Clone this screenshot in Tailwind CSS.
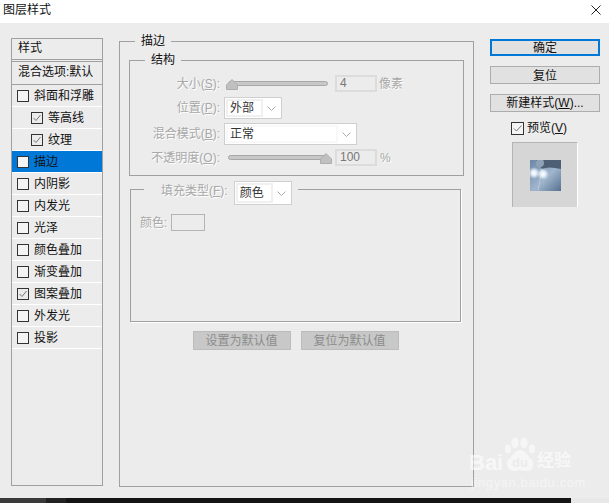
<!DOCTYPE html>
<html lang="zh">
<head>
<meta charset="utf-8">
<title>图层样式</title>
<script src="https://cdn.jsdelivr.net/npm/@tailwindcss/browser@4"></script>
</head>
<body class="m-0 overflow-hidden">
<div class="relative w-[609px] h-[503px] flex flex-col overflow-hidden bg-[#ececec] text-[12px] leading-[16px] text-[#111] font-['Liberation_Sans','Noto_Sans_CJK_SC',sans-serif]">
  <!-- title bar -->
  <div class="h-[23px] shrink-0 bg-white flex items-center justify-between pl-[3px] pr-[8px]">
    <span class="text-[#111] -mt-[4px]">图层样式</span>
    <svg class="w-[10px] h-[10px] -mt-[3px]" viewBox="0 0 10 10"><path d="M0.5 0.5L9.5 9.5M9.5 0.5L0.5 9.5" stroke="#222" stroke-width="1" fill="none"/></svg>
  </div>

  <div class="flex-1 flex items-start min-h-0">
    <!-- left list -->
    <div class="ml-[11px] mt-[15px] w-[92px] h-[448px] shrink-0 border border-[#a0a0a0] flex flex-col">
      <div class="h-[21px] shrink-0 pl-[6px] pb-[3px] flex items-center border-b border-[#a0a0a0]">样式</div>
      <div class="h-[24px] shrink-0 mt-[1px] border-t border-b border-[#a0a0a0] pl-[6px] pb-[3px] flex items-center whitespace-nowrap">混合选项:默认</div>
      <div class="flex flex-col">
        <div class="h-[22px] flex items-center border-b border-white pl-[5px] gap-[5px]"><span class="w-[12px] h-[12px] border border-[#333] bg-[#f4f4f4] shrink-0"></span>斜面和浮雕</div>
        <div class="h-[22px] flex items-center border-b border-white pl-[19px] gap-[5px]"><svg class="w-[12px] h-[12px] shrink-0" viewBox="0 0 12 12"><rect x=".5" y=".5" width="11" height="11" fill="#ececec" stroke="#333"/><path d="M2.5 6l2.5 2.5L9.5 3" stroke="#777" fill="none"/></svg>等高线</div>
        <div class="h-[22px] flex items-center border-b border-white pl-[19px] gap-[5px]"><svg class="w-[12px] h-[12px] shrink-0" viewBox="0 0 12 12"><rect x=".5" y=".5" width="11" height="11" fill="#ececec" stroke="#333"/><path d="M2.5 6l2.5 2.5L9.5 3" stroke="#777" fill="none"/></svg>纹理</div>
        <div class="h-[22px] flex items-center border-b border-white pl-[5px] gap-[5px] bg-[#0078d7]"><span class="w-[12px] h-[12px] border border-[#333] bg-[#f4f4f4] shrink-0"></span>描边</div>
        <div class="h-[22px] flex items-center border-b border-white pl-[5px] gap-[5px]"><span class="w-[12px] h-[12px] border border-[#333] bg-[#f4f4f4] shrink-0"></span>内阴影</div>
        <div class="h-[22px] flex items-center border-b border-white pl-[5px] gap-[5px]"><span class="w-[12px] h-[12px] border border-[#333] bg-[#f4f4f4] shrink-0"></span>内发光</div>
        <div class="h-[22px] flex items-center border-b border-white pl-[5px] gap-[5px]"><span class="w-[12px] h-[12px] border border-[#333] bg-[#f4f4f4] shrink-0"></span>光泽</div>
        <div class="h-[22px] flex items-center border-b border-white pl-[5px] gap-[5px]"><span class="w-[12px] h-[12px] border border-[#333] bg-[#f4f4f4] shrink-0"></span>颜色叠加</div>
        <div class="h-[22px] flex items-center border-b border-white pl-[5px] gap-[5px]"><span class="w-[12px] h-[12px] border border-[#333] bg-[#f4f4f4] shrink-0"></span>渐变叠加</div>
        <div class="h-[22px] flex items-center border-b border-white pl-[5px] gap-[5px]"><svg class="w-[12px] h-[12px] shrink-0" viewBox="0 0 12 12"><rect x=".5" y=".5" width="11" height="11" fill="#ececec" stroke="#333"/><path d="M2.5 6l2.5 2.5L9.5 3" stroke="#777" fill="none"/></svg>图案叠加</div>
        <div class="h-[22px] flex items-center border-b border-white pl-[5px] gap-[5px]"><span class="w-[12px] h-[12px] border border-[#333] bg-[#f4f4f4] shrink-0"></span>外发光</div>
        <div class="h-[22px] flex items-center border-b border-white pl-[5px] gap-[5px]"><span class="w-[12px] h-[12px] border border-[#333] bg-[#f4f4f4] shrink-0"></span>投影</div>
      </div>
    </div>

    <!-- middle -->
    <fieldset class="ml-[16px] mt-[9px] w-[355px] h-[455px] shrink-0 border border-[#a0a0a0] pl-[9px] pr-[9px] min-w-0">
      <legend class="ml-[6px] px-[6px] h-[18px] leading-[18px] text-[#111]">描边</legend>

      <fieldset class="mt-[2px] w-[335px] h-[124px] border border-[#a0a0a0] min-w-0">
        <legend class="ml-[15px] px-[6px] h-[16px] leading-[16px] text-[#111]">结构</legend>
        <div class="flex flex-col pt-[7px] text-[#a8a8a8] [text-shadow:1px_1px_0_#fff]">
          <div class="h-[17px] flex items-center">
            <span class="w-[90px] text-right shrink-0">大小(<u>S</u>):</span>
            <div class="relative ml-[8px] w-[100px] h-[5px] rounded-full bg-[#c8c8c8] border border-[#a8a8a8]">
              <svg class="absolute left-[-3px] top-[-3px] w-[12px] h-[11px]" viewBox="0 0 12 11"><path d="M6 0.5L11.5 6V10.5H0.5V6Z" fill="#c0c0c0" stroke="#adadad"/></svg>
            </div>
            <span class="ml-[7px] w-[42px] h-[17px] shrink-0 border-2 border-[#dcdcdc] bg-[#ececec] pl-[3px] leading-[13px] text-[#777] [text-shadow:none]">4</span>
            <span class="ml-[2px]">像素</span>
          </div>
          <div class="h-[22px] mt-[5px] flex items-center">
            <span class="w-[90px] text-right shrink-0">位置(<u>P</u>):</span>
            <div class="ml-[4px] w-[58px] h-[22px] shrink-0 border border-[#cfcfcf] bg-white p-[1px] flex [text-shadow:none]">
              <span class="w-[37px] border-2 border-[#f0f0f0] pl-[2px] leading-[15px] text-[#333]">外部</span>
              <span class="flex-1 flex items-center justify-center"><svg class="w-[9px] h-[5px]" viewBox="0 0 9 5"><path d="M.5 .5L4.5 4.5L8.5 .5" stroke="#aaa" fill="none"/></svg></span>
            </div>
          </div>
          <div class="h-[22px] mt-[4px] flex items-center">
            <span class="w-[90px] text-right shrink-0 whitespace-nowrap">混合模式(<u>B</u>):</span>
            <div class="ml-[4px] w-[133px] h-[22px] shrink-0 border border-[#cfcfcf] bg-white p-[1px] flex [text-shadow:none]">
              <span class="w-[112px] border-2 border-[#f8f8f8] pl-[2px] leading-[15px] text-[#333]">正常</span>
              <span class="flex-1 flex items-center justify-center"><svg class="w-[9px] h-[5px]" viewBox="0 0 9 5"><path d="M.5 .5L4.5 4.5L8.5 .5" stroke="#aaa" fill="none"/></svg></span>
            </div>
          </div>
          <div class="h-[17px] mt-[4px] flex items-center">
            <span class="w-[90px] text-right shrink-0 whitespace-nowrap">不透明度(<u>O</u>):</span>
            <div class="relative ml-[8px] w-[100px] h-[5px] rounded-full bg-[#c8c8c8] border border-[#a8a8a8]">
              <svg class="absolute right-[-5px] top-[-3px] w-[12px] h-[11px]" viewBox="0 0 12 11"><path d="M6 0.5L11.5 6V10.5H0.5V6Z" fill="#c0c0c0" stroke="#adadad"/></svg>
            </div>
            <span class="ml-[7px] w-[42px] h-[17px] shrink-0 border-2 border-[#dcdcdc] bg-[#ececec] pl-[3px] leading-[13px] text-[#777] [text-shadow:none]">100</span>
            <span class="ml-[3px]">%</span>
          </div>
        </div>
      </fieldset>

      <fieldset class="mt-[5px] ml-[1px] w-[331px] h-[141px] border border-[#a0a0a0] min-w-0 [box-shadow:1px_1px_0_#fff]">
        <legend class="ml-[13px] pl-[17px] pr-[6px] h-[16px] flex items-start">
          <span class="mt-[2px] mr-[6px] whitespace-nowrap text-[#a8a8a8] [text-shadow:1px_1px_0_#fff]">填充类型(<u>F</u>):</span>
          <div class="w-[58px] h-[24px] shrink-0 border border-[#cfcfcf] bg-white p-[1px] flex">
            <span class="w-[37px] border-2 border-[#f0f0f0] pl-[2px] leading-[16px] text-[#333]">颜色</span>
            <span class="flex-1 flex items-center justify-center"><svg class="w-[9px] h-[5px]" viewBox="0 0 9 5"><path d="M.5 .5L4.5 4.5L8.5 .5" stroke="#aaa" fill="none"/></svg></span>
          </div>
        </legend>
        <div class="mt-[17px] ml-[9px] flex items-center text-[#a8a8a8] [text-shadow:1px_1px_0_#fff]">
          <span class="whitespace-nowrap">颜色:</span>
          <span class="ml-[4px] w-[34px] h-[17px] border border-[#b4b4b4] bg-[#ececec]"></span>
        </div>
      </fieldset>

      <div class="mt-[9px] flex justify-center gap-[10px] pr-[2px]">
        <button class="w-[98px] h-[19px] bg-[#c8c8c8] border border-[#bcbcbc] text-[#8c8c8c] text-[12px] leading-[16px]">设置为默认值</button>
        <button class="w-[98px] h-[19px] bg-[#c8c8c8] border border-[#bcbcbc] text-[#8c8c8c] text-[12px] leading-[16px]">复位为默认值</button>
      </div>
    </fieldset>

    <!-- right -->
    <div class="ml-[16px] mt-[16px] w-[110px] shrink-0 flex flex-col">
      <button class="h-[17px] pt-[1px] bg-[#e1e1e1] border-2 border-[#0078d7] text-[#111] text-[12px] leading-[13px]">确定</button>
      <button class="mt-[10px] h-[18px] pt-[1px] bg-[#e1e1e1] border border-[#adadad] text-[#111] text-[12px] leading-[16px]">复位</button>
      <button class="mt-[10px] h-[18px] bg-[#e1e1e1] border border-[#adadad] text-[#111] text-[12px] leading-[16px] whitespace-nowrap">新建样式(<u>W</u>)...</button>
      <div class="mt-[9px] ml-[21px] h-[14px] flex items-center gap-[3px]">
        <svg class="w-[13px] h-[13px] shrink-0" viewBox="0 0 13 13"><rect x=".5" y=".5" width="12" height="12" fill="#f4f4f4" stroke="#333"/><path d="M3 6.5l2.5 2.5L10.5 3.5" stroke="#777" fill="none"/></svg>
        <span>预览(<u>V</u>)</span>
      </div>
      <div class="mt-[7px] ml-[22px] w-[66px] h-[65px] bg-[#d6d6d6] border-t border-l border-r border-[#b4b4b4] border-r-white flex items-center justify-center">
        <svg class="w-[31px] h-[31px]" viewBox="0 0 31 31">
          <defs>
            <linearGradient id="pg" x1="0" y1="0" x2="1" y2="1"><stop offset="0" stop-color="#6a86a6"/><stop offset=".55" stop-color="#a0b6cd"/><stop offset="1" stop-color="#55708f"/></linearGradient>
            <radialGradient id="pw"><stop offset="0" stop-color="#fff"/><stop offset=".4" stop-color="#e6f0fa"/><stop offset="1" stop-color="#e6f0fa" stop-opacity="0"/></radialGradient>
          </defs>
          <rect width="31" height="31" fill="url(#pg)"/>
          <path d="M6 0H31V9Q18 6 12 9Z" fill="#4d5f74"/>
          <path d="M12 9L8 31" stroke="#c3d0de" stroke-width="1" opacity=".7"/>
          <circle cx="4" cy="13" r="6" fill="url(#pw)"/>
          <circle cx="13" cy="14" r="6" fill="url(#pw)"/>
          <circle cx="10" cy="3" r="4" fill="#8fa3b8"/>
        </svg>
      </div>
    </div>
  </div>

  <!-- bottom strip -->
  <div class="h-[5px] shrink-0 flex">
    <div class="w-[46px] bg-[#3a3a3a]"></div>
    <div class="w-[20px] bg-[#222]"></div>
    <div class="w-[505px] bg-[#141414]"></div>
    <div class="flex-1 bg-[#e8e8e8]"></div>
  </div>

  <!-- watermark -->
  <div class="absolute left-[469px] top-[436px] w-[110px] h-[54px] text-white/60 pointer-events-none">
    <span class="absolute left-0 top-[15px] text-[22px] leading-[24px] font-bold font-['Liberation_Sans',sans-serif]">Bai</span>
    <svg class="absolute left-[35px] top-0 w-[32px] h-[36px]" viewBox="0 0 32 36">
      <g fill="#fff" fill-opacity=".55">
        <ellipse cx="4" cy="13" rx="3.2" ry="4.6"/>
        <ellipse cx="11" cy="7" rx="3.6" ry="5.4"/>
        <ellipse cx="20" cy="7" rx="3.6" ry="5.4"/>
        <ellipse cx="28" cy="13" rx="3.2" ry="4.6"/>
        <path d="M16 14C10 14 9 20 5 23C1 27 3 35 10 35C13 35 14 34 16 34C18 34 20 35 23 35C30 35 31 27 27 23C23 20 22 14 16 14Z"/>
      </g>
      <text x="16" y="31" text-anchor="middle" font-size="13" font-weight="700" fill="#ececec" font-family="Liberation Sans">du</text>
    </svg>
    <span class="absolute left-[68px] top-[14px] text-[17px] leading-[22px] font-bold whitespace-nowrap">经验</span>
    <span class="absolute left-[2px] top-[39px] text-[13px] leading-[16px] tracking-[0.6px] whitespace-nowrap text-white/50">jingyan.baidu.com</span>
  </div>
</div>
</body>
</html>
